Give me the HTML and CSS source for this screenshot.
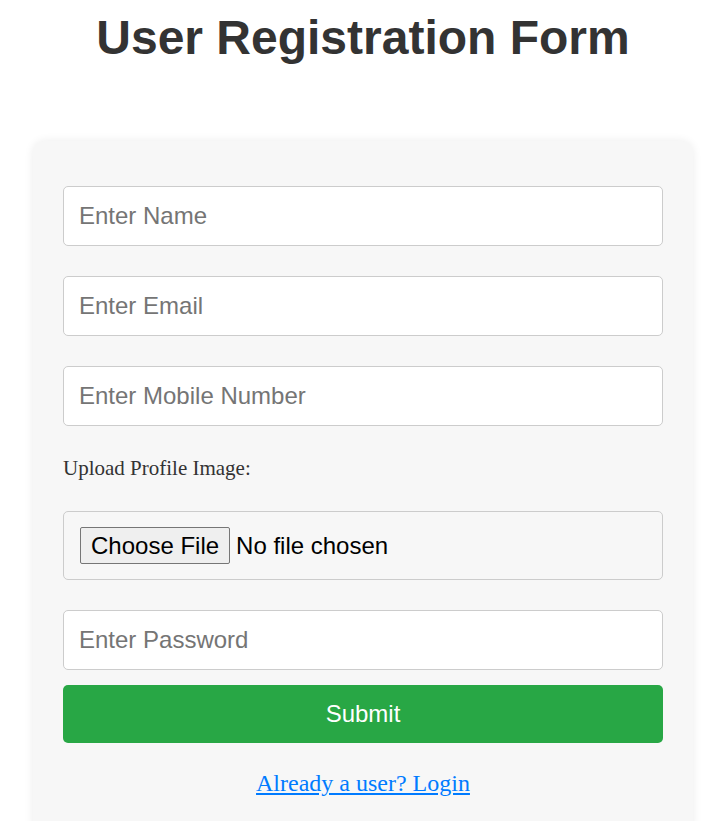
FILE: index.html
```html
<!DOCTYPE html>
<html lang="en">
<head>
<meta charset="utf-8">
<title>User Registration Form</title>
<link rel="stylesheet" href="styles.css">
</head>
<body>
<h1 class="title">User Registration Form</h1>
<form class="card">
  <input class="field" type="text" placeholder="Enter Name">
  <input class="field" type="email" placeholder="Enter Email">
  <input class="field" type="tel" placeholder="Enter Mobile Number">
  <label class="label" for="pic">Upload Profile Image:</label>
  <input class="file" id="pic" type="file">
  <input class="field field-last" type="password" placeholder="Enter Password">
  <button class="submit" type="button">Submit</button>
  <p class="login"><a href="#">Already a user? Login</a></p>
</form>
</body>
</html>
```

FILE: styles.css
```css
html, body {
  background: #ffffff;
}
body {
  margin: 0;
  padding: 10px 0 0 14px;
  font-family: "Liberation Serif", serif;
}
.title {
  margin: 0 0 76px;
  text-align: center;
  font-family: "Liberation Sans", Arial, sans-serif;
  font-weight: bold;
  font-size: 48px;
  color: #333333;
}
.card {
  width: 660px;
  box-sizing: border-box;
  margin: 0 auto;
  background: #f7f7f7;
  border-radius: 12px;
  box-shadow: 0 0 10px rgba(0, 0, 0, 0.08);
  padding: 45px 30px 40px;
}
.field {
  display: block;
  width: 100%;
  box-sizing: border-box;
  height: 60px;
  margin: 0 0 30px;
  padding: 0 15px;
  font-family: "Liberation Sans", Arial, sans-serif;
  font-size: 24px;
  color: #333;
  background: #ffffff;
  border: 1px solid #cccccc;
  border-radius: 5px;
  outline: none;
}
.field::placeholder {
  color: #757575;
}
.field-last {
  margin-bottom: 15px;
}
.label {
  display: block;
  font-family: "Liberation Serif", serif;
  font-size: 21px;
  line-height: 24px;
  color: #333333;
  margin: 0 0 31px;
}
.file {
  display: block;
  width: 100%;
  box-sizing: border-box;
  height: 69px;
  margin: 0 0 30px;
  padding: 15px 15px 15px 16px;
  font-family: "Liberation Sans", Arial, sans-serif;
  font-size: 24px;
  color: #000;
  background: transparent;
  border: 1px solid #cccccc;
  border-radius: 5px;
}
.file::file-selector-button {
  font-family: "Liberation Sans", Arial, sans-serif;
  font-size: 24px;
  height: 37px;
  padding: 0 10px;
  margin-right: 6px;
  background: #efefef;
  border: 1px solid #767676;
  border-radius: 2px;
  color: #000;
}
.submit {
  display: block;
  width: 100%;
  height: 58px;
  border: none;
  border-radius: 5px;
  background: #28a745;
  color: #ffffff;
  font-family: "Liberation Sans", Arial, sans-serif;
  font-size: 24px;
}
.login {
  margin: 27px 0 0;
  text-align: center;
  font-size: 24px;
}
.login a {
  color: #007bff;
  text-decoration: underline;
}
```
